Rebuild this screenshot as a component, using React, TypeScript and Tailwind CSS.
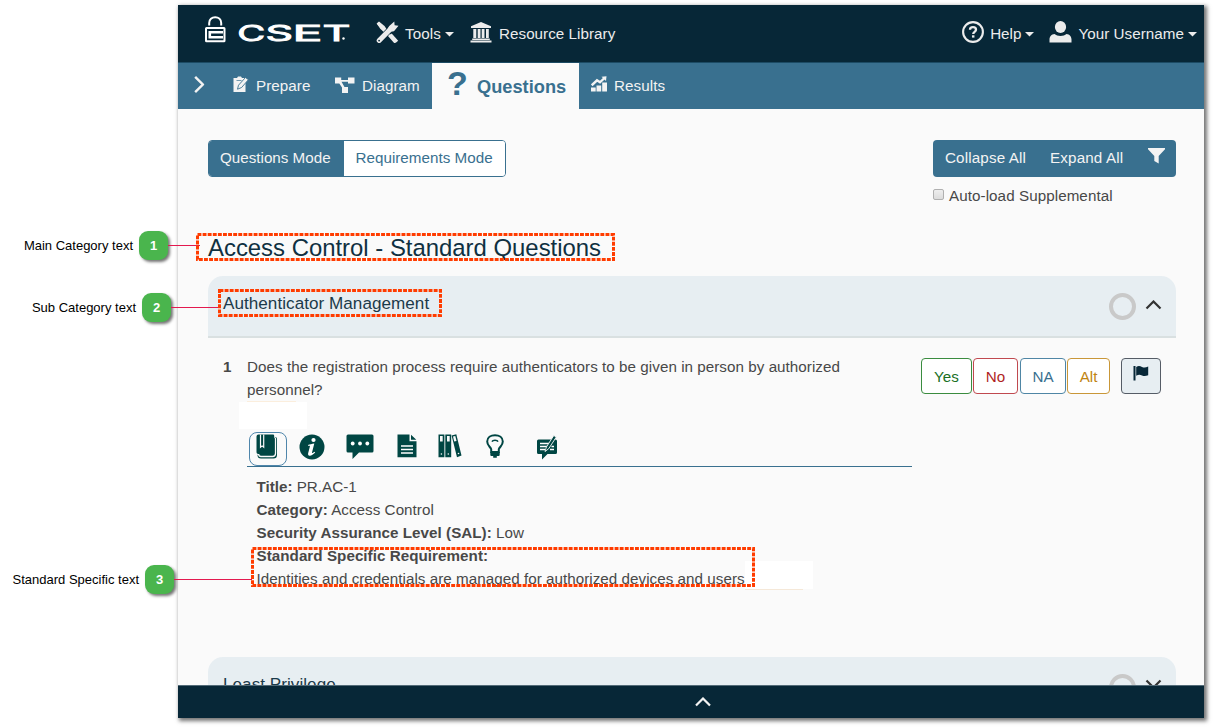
import React from "react";

type IconProps = { className?: string };

const Caret = () => (
  <svg className="ml-[4px] mt-[1px] h-[5px] w-[9px] shrink-0" viewBox="0 0 9 5">
    <path d="M0 0h9L4.5 4.6z" fill="#ececec" />
  </svg>
);

const LockLogo = () => (
  <svg className="h-[27px] w-[21px] shrink-0" viewBox="0 0 21 27" fill="none" stroke="#fff">
    <path d="M4.2 9.500V7C4.2 3.400 6.800 1.300 10.200 1.300s6 2.100 6 5.700V9.500" strokeWidth="2" />
    <rect x="1" y="12" width="18.500" height="13.200" rx=".5" strokeWidth="2" />
    <path d="M18 16.300H4.800V21.200H18" strokeWidth="2.600" />
  </svg>
);

const Wordmark = () => (
  <svg className="ml-[10px] h-[22px] w-[118px] shrink-0 overflow-visible" viewBox="0 0 118 22" fill="#fff" stroke="#fff" strokeWidth=".8" fontFamily="Inter, sans-serif" fontSize="21.500">
    <text x="1.200" y="20" textLength="28" lengthAdjust="spacingAndGlyphs">C</text>
    <text x="29.500" y="20" textLength="27.500" lengthAdjust="spacingAndGlyphs">S</text>
    <text x="56.500" y="20" textLength="30" lengthAdjust="spacingAndGlyphs">E</text>
    <text x="86.500" y="20" textLength="28" lengthAdjust="spacingAndGlyphs">T</text>
    <circle cx="107.500" cy="17.500" r="1.200" stroke="none" />
  </svg>
);

const ToolsIcon = () => (
  <svg className="h-[23px] w-[23px] shrink-0" viewBox="0 0 23 23">
    <path d="M3 3l9 9.800 6.800 7.600" stroke="#ececec" strokeWidth="3" fill="none" strokeLinecap="round" />
    <path d="M14.500 13.500l6.500 7.300" stroke="#ececec" strokeWidth="3.200" />
    <path d="M.600 2.500L3 .600 8.500 5l3 4.500-3 2.200-4.200-4z" fill="#ececec" />
    <path d="M3.500 19.400L16 6.400" stroke="#072737" strokeWidth="6.400" />
    <path d="M3.200 19.400L15.500 7" stroke="#ececec" strokeWidth="5" strokeLinecap="round" />
    <path d="M13.500 4.800L18.300.500l.3 3.700 3.900.6-4.300 5.100c-2.500 1.500-6 .2-6-2.300 0-1.100.5-2 1.300-2.800z" fill="#ececec" />
    <circle cx="3.100" cy="19.600" r=".9" fill="#072737" />
  </svg>
);

const LibraryIcon = () => (
  <svg className="h-[21px] w-[22px] shrink-0" viewBox="0 0 22 21" fill="#ececec">
    <path d="M11 0l10 4.300v1.600H1V4.300zM3.300 7h3v9h-3zM7.700 7h2.800v9H7.700zM11.700 7h2.800v9h-2.800zM16 7h2.800v9H16zM2.200 16.500h17.600V18H2.200zM.5 18.600h21v1.900H.5z" />
  </svg>
);

const HelpIcon = () => (
  <svg className="h-[22px] w-[22px] shrink-0" viewBox="0 0 22 22" fill="none" stroke="#ececec">
    <circle cx="11" cy="11" r="9.900" strokeWidth="2.100" />
    <path d="M8 8.800C8 7 9.300 6.200 11 6.200s3 .9 3 2.500c0 2.200-2.800 2.100-2.800 4.300" strokeWidth="2.300" />
    <path d="M11.200 14.300v2.300" strokeWidth="2.500" />
  </svg>
);

const UserIcon = () => (
  <svg className="h-[22px] w-[23px] shrink-0" viewBox="0 0 23 22" fill="#ececec">
    <ellipse cx="11.500" cy="6" rx="5.600" ry="6" />
    <path d="M.5 21.500v-3c0-3 2-5.300 5-5.500 1.500 1.300 3.500 2 6 2s4.500-.7 6-2c3 .2 5 2.500 5 5.500v3z" />
  </svg>
);

const Chevron = ({ className = "" }: IconProps) => (
  <svg className={className} viewBox="0 0 16 10" fill="none" stroke="currentColor" strokeWidth="2.200">
    <path d="M1 8.500L8 1.500l7 7" />
  </svg>
);

const PrepareIcon = () => (
  <svg className="h-[17px] w-[16px] shrink-0" viewBox="0 0 16 17">
    <path d="M.5 2H4l1-1.500h3L9 2h3.500v14H.5z" fill="#f3f3f3" />
    <path d="M4.500 13.200l1-4L12.500 1.500l2.900 2.200-6.800 7.800z" fill="#f3f3f3" stroke="#39708f" strokeWidth=".9" />
    <path d="M3.500 4.500h5" stroke="#39708f" strokeWidth=".7" />
  </svg>
);

const DiagramIcon = () => (
  <svg className="h-[17px] w-[20px] shrink-0" viewBox="0 0 20 17" fill="#f3f3f3">
    <path d="M0 .5h6.200V3H13V.5h6.500v6H13V4.800H6.500l3 5.200H13v6H7v-5.500L4.300 6.500H0z" />
  </svg>
);

const ResultsIcon = () => (
  <svg className="h-[16px] w-[17px] shrink-0" viewBox="0 0 17 16" fill="#f3f3f3">
    <path d="M0 11.500h4.700v4H0zM5.500 9.500H10.200v6H5.500zM11.200 6.500H16v9h-4.800z" />
    <path d="M.7 9.300L6 4.300l3 2L13.500 2" fill="none" stroke="#f3f3f3" strokeWidth="2.400" />
    <path d="M10.500.8L15.500.3 15 5z" />
  </svg>
);

const FilterIcon = () => (
  <svg className="h-[16px] w-[17px] shrink-0" viewBox="0 0 17 16" fill="#f3f3f3">
    <path d="M0 0h17v1.300L10.700 8v7.500L6.300 13V8L0 1.300z" />
  </svg>
);

const FlagIcon = () => (
  <svg className="h-[17px] w-[17px]" viewBox="0 0 17 17" fill="#072737">
    <path d="M.5 1h2v14.500h-2zM3.200 2c2.500-1.500 4-.8 5.800 0 2 .8 3.500.8 6.200-.4v8.600c-2.700 1-4.200 1-6.200.2-1.800-.7-3.300-1.100-5.800.3z" />
  </svg>
);

const BookIcon = () => (
  <svg className="h-[26px] w-[22px]" viewBox="0 0 22 26">
    <path d="M19 3.500h1.200a.8.800 0 0 1 .8.800V21a3.500 3.500 0 0 1-3.500 3.500H5A3.500 3.500 0 0 1 1.500 21" fill="#004643" />
    <path d="M2.500 19.500c0 1.900.9 3 2.500 3h11.500c2 0 3-1 3-3V4" stroke="#fafafa" strokeWidth="1.300" fill="none" />
    <path d="M2.500.5H17a1.200 1.200 0 0 1 1.200 1.200V18.500a1.500 1.500 0 0 1-1.500 1.500H2.200A1.700 1.700 0 0 1 .5 18.300V2.500a2 2 0 0 1 2-2z" fill="#004643" />
    <path d="M4.500.5v12.700l1.600-1.300 1.600 1.300V.5" stroke="#fafafa" strokeWidth="1.200" fill="none" />
  </svg>
);

const InfoIcon = () => (
  <svg className="h-[26px] w-[26px]" viewBox="0 0 26 26">
    <circle cx="13" cy="13" r="12.500" fill="#004643" />
    <circle cx="14.500" cy="6" r="2.100" fill="#fff" />
    <path d="M9 11c2-.5 3.800-1.300 6.300-1.500L13 18.500c-.2 1 .5.8 2.500-.8l.7.9c-2 2-4 3.300-5.600 3.100-1.500-.2-1.800-1.400-1.400-2.800l1.700-6.400c.2-.8-.5-.7-1.900-.7z" fill="#fff" />
  </svg>
);

const CommentIcon = () => (
  <svg className="h-[26px] w-[28px]" viewBox="0 0 28 26">
    <path d="M2 .5h24A1.500 1.500 0 0 1 27.500 2v15a1.500 1.500 0 0 1-1.500 1.500H13L6.500 25v-6.500H2A1.500 1.500 0 0 1 .5 17V2A1.500 1.500 0 0 1 2 .5z" fill="#004643" />
    <g fill="#fff"><circle cx="6.700" cy="9.500" r="1.900" /><circle cx="14" cy="9.500" r="1.900" /><circle cx="21.300" cy="9.500" r="1.900" /></g>
  </svg>
);

const DocIcon = () => (
  <svg className="h-[24px] w-[20px]" viewBox="0 0 20 24">
    <path d="M.5.5h12v6.700h7v16H.5zM14 .8l5.300 5H14z" fill="#004643" />
    <path d="M4 12h12M4 15.500h12M4 19h12" stroke="#fff" strokeWidth="1.500" />
  </svg>
);

const BooksIcon = () => (
  <svg className="h-[24px] w-[24px]" viewBox="0 0 24 24">
    <path d="M.5.5h5.900v22.700H.5zM7.300.5h5.900v22.700H7.300zM13.600 1.500L18.300.3l5.200 21.200-4.500 1.700z" fill="#004643" />
    <path d="M2 2h2.700v5.500H2zM9 2h2.700v5.500H9zM15 2.600l2.300-.6 1.200 5-2.300.6z" fill="#fafafa" />
    <circle cx="3.400" cy="20" r=".8" fill="#fafafa" /><circle cx="10.300" cy="20" r=".8" fill="#fafafa" /><circle cx="20.500" cy="19.500" r=".8" fill="#fafafa" />
  </svg>
);

const BulbIcon = () => (
  <svg className="h-[24px] w-[18px]" viewBox="0 0 18 24" fill="none" stroke="#004643">
    <path d="M5.200 18v-2.700C4.500 12.800 1.200 11.800 1.200 7.600 1.200 3.500 4.800 1.200 9 1.200s7.800 2.300 7.800 6.400c0 4.200-3.300 5.200-4 7.700V18z" strokeWidth="2" />
    <path d="M6 7.600C6.800 5.800 11.200 5.800 12 7.600" strokeWidth="1.600" />
    <path d="M4.300 18h9.400v2.700c0 .8-.5 1.300-1.300 1.300h-1.600v1.700H7.200V22H5.600c-.8 0-1.300-.5-1.300-1.300z" fill="#004643" stroke="none" />
  </svg>
);

const FeedbackIcon = () => (
  <svg className="h-[27px] w-[22px]" viewBox="0 0 22 27">
    <path d="M1.500 5.500h17A1.500 1.500 0 0 1 20 7v11.500a1.500 1.500 0 0 1-1.500 1.500H10.500L5 25.500V20H1.500A1.500 1.500 0 0 1 0 18.500V7a1.500 1.500 0 0 1 1.500-1.500z" fill="#004643" />
    <path d="M3 9.500h10M3 12.500h8M3 15.500h5M13 15.500h4M14.500 12.500H17" stroke="#fff" strokeWidth="1.300" />
    <path d="M8 17.500l1.400-4.500L16.800 1.500l2.500 1.500-7.600 11.700z" fill="#004643" stroke="#fafafa" strokeWidth=".9" />
  </svg>
);

const SubCategory = ({ title, open }: { title: string; open: boolean }) => (
  <div className="flex h-[62px] shrink-0 items-start justify-between rounded-t-[15px] border-b-2 border-[#d9e0e1] bg-[#e7eef2] pl-[15px] pr-[14px]">
    <span className="mt-[17px] text-[17.1px] leading-[22px] tracking-[0.04px] text-[#1b3a4a]">{title}</span>
    <div className="mt-[17px] flex items-center">
      <span className="h-[27px] w-[27px] rounded-full border-4 border-[#c9c9c9]" />
      <Chevron className={open ? "ml-[9px] mb-[4px] h-[10px] w-[17px] text-[#333]" : "ml-[9px] mb-[8px] h-[10px] w-[17px] rotate-180 text-[#333]"} />
    </div>
  </div>
);

const DashedBox = ({ className }: IconProps) => (
  <svg className={"absolute " + className} fill="none">
    <rect x="1.500" y="1.500" className="h-[calc(100%-3px)] w-[calc(100%-3px)]" stroke="#ff3c00" strokeWidth="3" strokeDasharray="3.900 1.200" />
  </svg>
);

const Callout = ({ label, n, className, line }: { label: string; n: number; className: string; line: string }) => (
  <div className={"absolute left-0 flex h-[29px] items-center " + className}>
    <span className="grow text-right text-[13px] leading-[16px] whitespace-nowrap text-black">{label}</span>
    <span className="ml-[6px] flex h-[29px] w-[29px] shrink-0 items-center justify-center rounded-[9px] bg-[#4ab54d] text-[13px] font-bold text-white shadow-[2px_2px_3px_rgba(0,0,0,0.55)]">{n}</span>
    <span className={"h-px shrink-0 bg-[#e3194f] " + line} />
  </div>
);

export default function App() {
  return (
    <div className="relative h-[727px] w-[1213px] overflow-hidden bg-white pl-[178px] pt-[5px] font-['Liberation_Sans',Arial,sans-serif] text-[15.2px] leading-[23px] text-[#484848]">
      <div className="flex h-[713px] w-[1026px] flex-col bg-[#fafafa] shadow-[2px_2px_4px_1px_rgba(0,0,0,0.55)]">
        <header className="flex h-[58px] shrink-0 items-center border-b border-[#1c4b64] bg-[#072737] pl-[27px] pr-[7px] text-[#ececec]">
          <div className="mb-[8px] flex w-[171px] items-end"><LockLogo /><Wordmark /></div>
          <div className="flex w-[94px] items-center"><span className="mb-[3px]"><ToolsIcon /></span><span className="ml-[6px] tracking-[0.1px]">Tools</span><Caret /></div>
          <div className="flex items-center"><span className="mb-[2px]"><LibraryIcon /></span><span className="ml-[7px] tracking-[0.04px]">Resource Library</span></div>
          <div className="ml-auto flex items-center"><span className="mb-[3px]"><HelpIcon /></span><span className="ml-[6px]">Help</span><Caret /></div>
          <div className="ml-[15px] flex items-center"><span className="mb-[4px]"><UserIcon /></span><span className="ml-[6px] tracking-[0.05px]">Your Username</span><Caret /></div>
        </header>

        <nav className="flex h-[46px] shrink-0 bg-[#39708f] text-[#f3f3f3]">
          <div className="flex w-[254px] items-center pb-[2px] pl-[12px]">
            <Chevron className="mb-[2px] h-[11px] w-[18px] rotate-90" />
            <div className="ml-[25px] flex w-[102px] items-center"><span className="mb-[2px]"><PrepareIcon /></span><span className="ml-[7px] tracking-[0.05px]">Prepare</span></div>
            <div className="flex items-center"><DiagramIcon /><span className="ml-[7px] tracking-[0.05px]">Diagram</span></div>
          </div>
          <div className="flex w-[147px] items-center bg-[#fafafa] pl-[15px] font-bold text-[#39708f]">
            <span className="mb-[7px] w-[30px] text-[34px] leading-[36px]">?</span>
            <span className="text-[18.24px]">Questions</span>
          </div>
          <div className="flex items-center pb-[2px] pl-[12px]"><span className="mb-[3px]"><ResultsIcon /></span><span className="ml-[6px] tracking-[0.08px]">Results</span></div>
        </nav>

        <main className="flex h-[576px] shrink-0 flex-col overflow-hidden pl-[30px] pr-[28px] pt-[31px]">
          <div className="flex h-[93px] shrink-0 items-start justify-between">
            <div className="flex h-[37px] w-[298px] overflow-hidden rounded-[4px] border border-[#39708f]">
              <span className="flex w-[134.500px] items-center bg-[#39708f] pb-[2px] pl-[11px] text-[#f3f3f3]">Questions Mode</span>
              <span className="flex grow items-center bg-white pb-[2px] pl-[12px] tracking-[0.02px] text-[#39708f]">Requirements Mode</span>
            </div>
            <div className="w-[243px]">
              <div className="flex h-[37px] items-center rounded-[4px] bg-[#39708f] pl-[12px] pr-[11px] pb-[2px] tracking-[0.14px] text-[#f3f3f3]">
                <span>Collapse All</span><span className="ml-[24px]">Expand All</span>
                <span className="mb-[3px] ml-auto"><FilterIcon /></span>
              </div>
              <div className="mt-[7px] flex items-center">
                <span className="mb-[2px] h-[11px] w-[11px] rounded-[2px] border border-[#b0b0b0] bg-linear-to-b from-[#eee] to-[#dcdcdc]" />
                <span className="ml-[5px] tracking-[0.07px]">Auto-load Supplemental</span>
              </div>
            </div>
          </div>

          <h1 className="h-[43px] shrink-0 text-[23.9px] leading-[30px] text-[#0f3041]">Access Control - Standard Questions</h1>

          <SubCategory title="Authenticator Management" open />

          <section className="flex h-[319px] shrink-0 pl-[15px] pr-[15px] pt-[17px]">
            <span className="w-[24px] shrink-0 font-bold">1</span>
            <div className="w-[665px] shrink-0">
              <p className="tracking-[0.042px]">Does the registration process require authenticators to be given in person by authorized<br />personnel?</p>
              <div className="h-px w-[49px] bg-[#fbeedd]" />
              <div className="-ml-[8px] h-[27px] w-[68px] bg-white" />
              <div className="flex h-[38px] items-start border-b-[1.500px] border-[#39708f] pl-[2px] pt-[3px]">
                <span className="flex h-[34px] w-[38px] justify-center rounded-[8px] border border-[#4f86ab] pr-[3px] pt-px"><BookIcon /></span>
                <span className="ml-[12px] mt-[2px]"><InfoIcon /></span>
                <span className="ml-[21px] mt-[2px]"><CommentIcon /></span>
                <span className="ml-[23px] mt-[2px]"><DocIcon /></span>
                <span className="ml-[21px] mt-[2px]"><BooksIcon /></span>
                <span className="ml-[24px] mt-[2px]"><BulbIcon /></span>
                <span className="ml-[33px] mt-[2px]"><FeedbackIcon /></span>
              </div>
              <div className="pl-[9.500px] pt-[8px]">
                <p><b>Title:</b> PR.AC-1</p>
                <p className="tracking-[0.04px]"><b>Category:</b> Access Control</p>
                <p className="tracking-[0.04px]"><b>Security Assurance Level (SAL):</b> Low</p>
                <p className="tracking-[0.04px]"><b>Standard Specific Requirement:</b></p>
                <div className="flex"><span className="tracking-[0.038px]">Identities and credentials are managed for authorized devices and users</span><span className="-mt-[6px] h-[28px] w-[68px] bg-white" /></div>
                <div className="-mt-px ml-[488px] h-px w-[58px] bg-[#f5e8d8]" />
              </div>
            </div>
            <div className="ml-auto flex items-start pt-[3px]">
              <span className="flex h-[36px] w-[51px] items-center justify-center rounded-[4px] border border-[#3a8c3f] bg-white text-[#1a701f]">Yes</span>
              <span className="ml-[1px] flex h-[36px] w-[45px] items-center justify-center rounded-[4px] border border-[#c0494f] bg-white text-[#b01f24]">No</span>
              <span className="ml-[2px] flex h-[36px] w-[46px] items-center justify-center rounded-[4px] border border-[#4f86a5] bg-white text-[#39708f]">NA</span>
              <span className="ml-[1px] flex h-[36px] w-[43px] items-center justify-center rounded-[4px] border border-[#c99738] bg-white text-[#c08412]">Alt</span>
              <span className="ml-[11px] flex h-[36px] w-[40px] justify-center rounded-[4px] border border-[#555c66] bg-[#e7eef2] pt-[6px]"><FlagIcon /></span>
            </div>
          </section>

          <SubCategory title="Least Privilege" open={false} />
        </main>

        <footer className="flex h-[33px] shrink-0 items-center justify-center border-t border-[#536b78] bg-[#072737] pl-[23px] text-[#f3f3f3]">
          <Chevron className="h-[10px] w-[16px]" />
        </footer>
      </div>

      <Callout label="Main Category text" n={1} className="top-[231px] w-[200px]" line="w-[32px]" />
      <Callout label="Sub Category text" n={2} className="top-[293px] w-[220px]" line="w-[49px]" />
      <Callout label="Standard Specific text" n={3} className="top-[565px] w-[252px]" line="w-[78px]" />
      <DashedBox className="left-[196px] top-[233px] h-[28px] w-[419px]" />
      <DashedBox className="left-[218px] top-[289px] h-[28px] w-[224px]" />
      <DashedBox className="left-[251px] top-[547px] h-[40px] w-[504px]" />
    </div>
  );
}
